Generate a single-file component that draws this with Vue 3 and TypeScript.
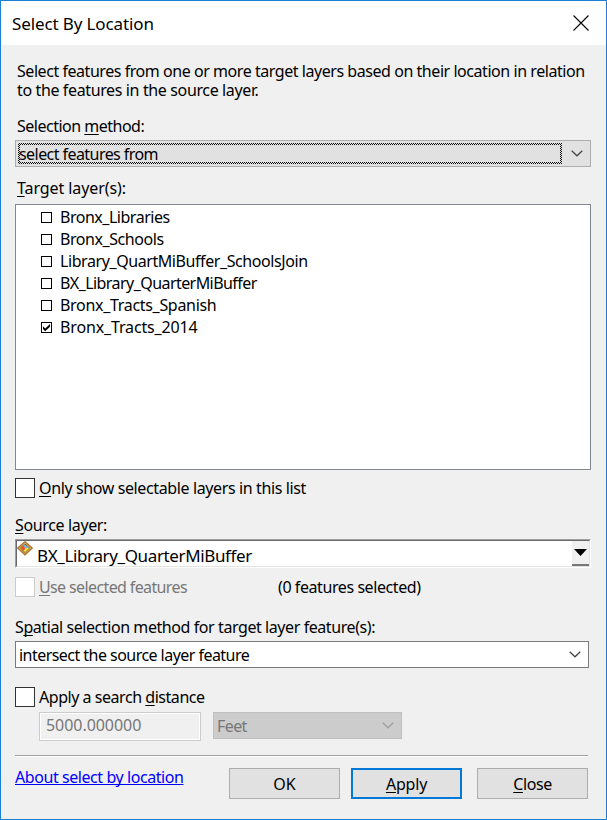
<script setup lang="ts">
import { ref } from 'vue'

interface Layer {
  name: string
  checked: boolean
  tracking: number
}

const layers = ref<Layer[]>([
  { name: 'Bronx_Libraries', checked: false, tracking: -0.48 },
  { name: 'Bronx_Schools', checked: false, tracking: -0.44 },
  { name: 'Library_QuartMiBuffer_SchoolsJoin', checked: false, tracking: -0.42 },
  { name: 'BX_Library_QuarterMiBuffer', checked: false, tracking: -0.56 },
  { name: 'Bronx_Tracts_Spanish', checked: false, tracking: -0.31 },
  { name: 'Bronx_Tracts_2014', checked: true, tracking: -0.14 },
])
const selectableOnly = ref(false)
const useDistance = ref(false)
</script>

<template>
  <div class="dialog">
    <header class="titlebar">
      <span class="title">Select By Location</span>
      <svg class="close" width="16" height="16" viewBox="0 0 16 16">
        <path d="M0.5 0.5 15.5 15.5M15.5 0.5 0.5 15.5" fill="none" stroke="#000" stroke-width="1.1" />
      </svg>
    </header>

    <main class="content">
      <div class="intro">
        <div class="intro-first">Select features from one or more target layers based on their location in relation</div>
        <div class="intro-second">to the features in the source layer.</div>
      </div>

      <div class="label method-label">Selection <u>m</u>ethod:</div>
      <div class="combo method">
        <div class="focus"><div class="focus-inner">select features from</div></div>
        <svg class="chevron" width="12" height="7" viewBox="0 0 12 7">
          <path d="M0.7 0.7 6 5.8 11.3 0.7" fill="none" stroke="#444" stroke-width="1.2" />
        </svg>
      </div>

      <div class="label target-label"><u>T</u>arget layer(s):</div>
      <ul class="layers">
        <li v-for="layer in layers" :key="layer.name" @click="layer.checked = !layer.checked">
          <svg width="11" height="11" viewBox="0 0 11 11">
            <rect x="0.5" y="0.5" width="10" height="10" fill="#fff" stroke="#000" />
            <path v-if="layer.checked" d="M2 4.2 4.2 6.4 9 2V4.8L4.2 9.2 2 7Z" fill="#000" />
          </svg>
          <span :style="{ letterSpacing: layer.tracking + 'px' }">{{ layer.name }}</span>
        </li>
      </ul>

      <div class="check only" @click="selectableOnly = !selectableOnly">
        <span class="box"></span><span><u>O</u>nly show selectable layers in this list</span>
      </div>

      <div class="label source-label"><u>S</u>ource layer:</div>
      <div class="source">
        <div class="source-field">
          <svg class="layer-icon" width="16" height="15" viewBox="0 0 16 15">
            <path d="M8 0.8 15.2 7 8 13.8 0.8 7Z" fill="#e9b65a" stroke="#a87532" stroke-width="1.3" />
            <path d="M8 3 12.5 7 8 11.4 3.5 7Z" fill="#fff0a0" stroke="#7c4e1c" stroke-width="1" />
            <path d="M7.2 3.2 12 6.8 9 7.4 6.3 4.4Z" fill="#65b7ee" />
            <path d="M6.2 4.6 8.5 7.3 6.8 9.8 3.8 7Z" fill="#ed5427" />
            <path d="M8.7 7.5 11.8 7.2 8 11 7 9.8Z" fill="#ffe32d" />
          </svg>
          <span class="source-name">BX_Library_QuarterMiBuffer</span>
          <span class="drop">
            <svg width="13" height="7" viewBox="0 0 13 7"><path d="M0 0H13L6.5 7Z" fill="#000" /></svg>
          </span>
        </div>
      </div>

      <div class="selected-row">
        <div class="check disabled"><span class="box"></span><span><u>U</u>se selected features</span></div>
        <span class="count">(0 features selected)</span>
      </div>

      <div class="label spatial-label">S<u>p</u>atial selection method for target layer feature(s):</div>
      <div class="combo spatial">
        <span>intersect the source layer feature</span>
        <svg class="chevron" width="12" height="7" viewBox="0 0 12 7">
          <path d="M0.7 0.7 6 5.8 11.3 0.7" fill="none" stroke="#444" stroke-width="1.2" />
        </svg>
      </div>

      <div class="check search" @click="useDistance = !useDistance">
        <span class="box"></span><span>Apply a search <u>d</u>istance</span>
      </div>
      <div class="distance">
        <div class="amount">5000.000000</div>
        <div class="combo unit">
          <span>Feet</span>
          <svg class="chevron" width="12" height="7" viewBox="0 0 12 7">
            <path d="M0.7 0.7 6 5.8 11.3 0.7" fill="none" stroke="#a0a0a0" stroke-width="1.2" />
          </svg>
        </div>
      </div>

      <div class="rule"></div>
      <footer class="footer">
        <a class="about">About select by location</a>
        <button type="button">OK</button>
        <button type="button" class="primary"><u>A</u>pply</button>
        <button type="button" class="dismiss"><u>C</u>lose</button>
      </footer>
    </main>
  </div>
</template>

<style>
body {
  margin: 0;
}
</style>

<style scoped>
* {
  box-sizing: border-box;
}
.dialog {
  width: 607px;
  height: 820px;
  border: 1px solid #1a80d4;
  background: #f0f0f0;
  color: #000;
  font: 16px/22px "Noto Sans", "Open Sans", sans-serif;
  white-space: nowrap;
  overflow: hidden;
}
u {
  text-decoration: underline;
  text-decoration-thickness: 1px;
  text-underline-offset: 2px;
  text-decoration-skip-ink: none;
}
svg {
  display: block;
  flex: none;
}
.titlebar {
  display: flex;
  align-items: center;
  justify-content: space-between;
  height: 44px;
  padding: 0 17px 0 11px;
  background: #fff;
}
.title {
  font-size: 17px;
  letter-spacing: -0.12px;
  padding-top: 1px;
}
.close {
  margin-bottom: 1px;
}
.content {
  padding: 17px 15px 0 14px;
}
.intro {
  padding-left: 2px;
  line-height: 19px;
}
.intro-first {
  letter-spacing: -0.45px;
}
.intro-second {
  letter-spacing: -0.37px;
}
.method-label {
  margin: 15px 0 0 2px;
  letter-spacing: -0.5px;
}
.combo {
  display: flex;
  align-items: center;
  justify-content: space-between;
  height: 27px;
  border: 1px solid #7a7a7a;
}
.method {
  width: 576px;
  margin-top: 3px;
  padding: 0 7px 0 2px;
  border-color: #adadad;
  background: #e1e1e1;
}
.focus {
  width: 544px;
  height: 21px;
  padding: 2px;
  background: repeating-conic-gradient(#111 0 25%, #e1e1e1 0 50%) 0 0 / 2px 2px;
}
.focus-inner {
  height: 17px;
  line-height: 18px;
  background: #e1e1e1;
  letter-spacing: -0.56px;
  text-indent: -1px;
}
.target-label {
  margin: 10px 0 0 2px;
  letter-spacing: -0.08px;
}
.layers {
  width: 576px;
  height: 266px;
  margin: 5px 0 0;
  padding: 1px 0 0 25px;
  border: 1px solid #828790;
  background: #fff;
  list-style: none;
}
.layers li {
  display: flex;
  align-items: center;
  gap: 8px;
  height: 22px;
}
.check {
  display: flex;
  align-items: center;
  gap: 4px;
  height: 20px;
}
.box {
  width: 20px;
  height: 20px;
  border: 1px solid #333;
  background: #fff;
}
.only {
  margin-top: 8px;
  letter-spacing: -0.38px;
}
.source-label {
  margin-top: 16px;
  letter-spacing: -0.36px;
}
.source {
  width: 576px;
  height: 29px;
  margin-top: 3px;
  border: 1px solid;
  border-color: #a0a0a0 #fff #fff #a0a0a0;
}
.source-field {
  display: flex;
  height: 27px;
  border: 1px solid;
  border-color: #696969 #e3e3e3 #e3e3e3 #696969;
  background: #fff;
}
.source-name {
  flex: 1;
  margin-left: 4px;
  padding-top: 4px;
  font-size: 17px;
  line-height: 21px;
  letter-spacing: -0.37px;
}
.drop {
  display: flex;
  align-items: center;
  justify-content: center;
  width: 17px;
  height: 25px;
  border-bottom: 2px solid #777;
  background: #f0f0f0;
}
.selected-row {
  display: flex;
  align-items: center;
  height: 20px;
  margin-top: 9px;
}
.selected-row .check {
  width: 263px;
  letter-spacing: -0.62px;
}
.disabled {
  color: #777;
}
.disabled .box {
  border-color: #ccc;
}
.count {
  letter-spacing: -0.42px;
}
.spatial-label {
  margin-top: 19px;
  letter-spacing: -0.42px;
}
.spatial {
  width: 574px;
  margin-top: 3px;
  padding: 0 7px 0 3px;
  background: #fff;
  letter-spacing: -0.54px;
}
.search {
  margin-top: 19px;
  letter-spacing: -0.46px;
}
.distance {
  display: flex;
  gap: 12px;
  height: 29px;
  margin: 5px 0 0 24px;
  color: #777;
}
.amount {
  width: 162px;
  padding: 1px 0 0 6px;
  border: 1px solid #ccc;
  box-shadow: inset 0 0 0 1px #fff;
  letter-spacing: -0.05px;
}
.unit {
  width: 189px;
  padding: 0 7px 0 3px;
  border-color: #bfbfbf;
  background: #ccc;
  letter-spacing: -0.6px;
}
.rule {
  width: 573px;
  height: 2px;
  margin-top: 14px;
  border-top: 1px solid #a0a0a0;
  border-bottom: 1px solid #fff;
}
.footer {
  display: flex;
  margin-top: 11px;
}
.about {
  width: 214px;
  margin-top: -2px;
  color: #00f;
  letter-spacing: -0.43px;
  text-decoration: underline;
  text-decoration-thickness: 1px;
  text-underline-offset: 1px;
  text-decoration-skip-ink: none;
}
button {
  width: 111px;
  height: 31px;
  padding: 0;
  border: 1px solid #adadad;
  background: #e1e1e1;
  color: #000;
  font: inherit;
}
.primary {
  margin: 0 15px 0 11px;
  border: 2px solid #0078d7;
  letter-spacing: -0.2px;
}
.dismiss {
  letter-spacing: -0.4px;
}
</style>
